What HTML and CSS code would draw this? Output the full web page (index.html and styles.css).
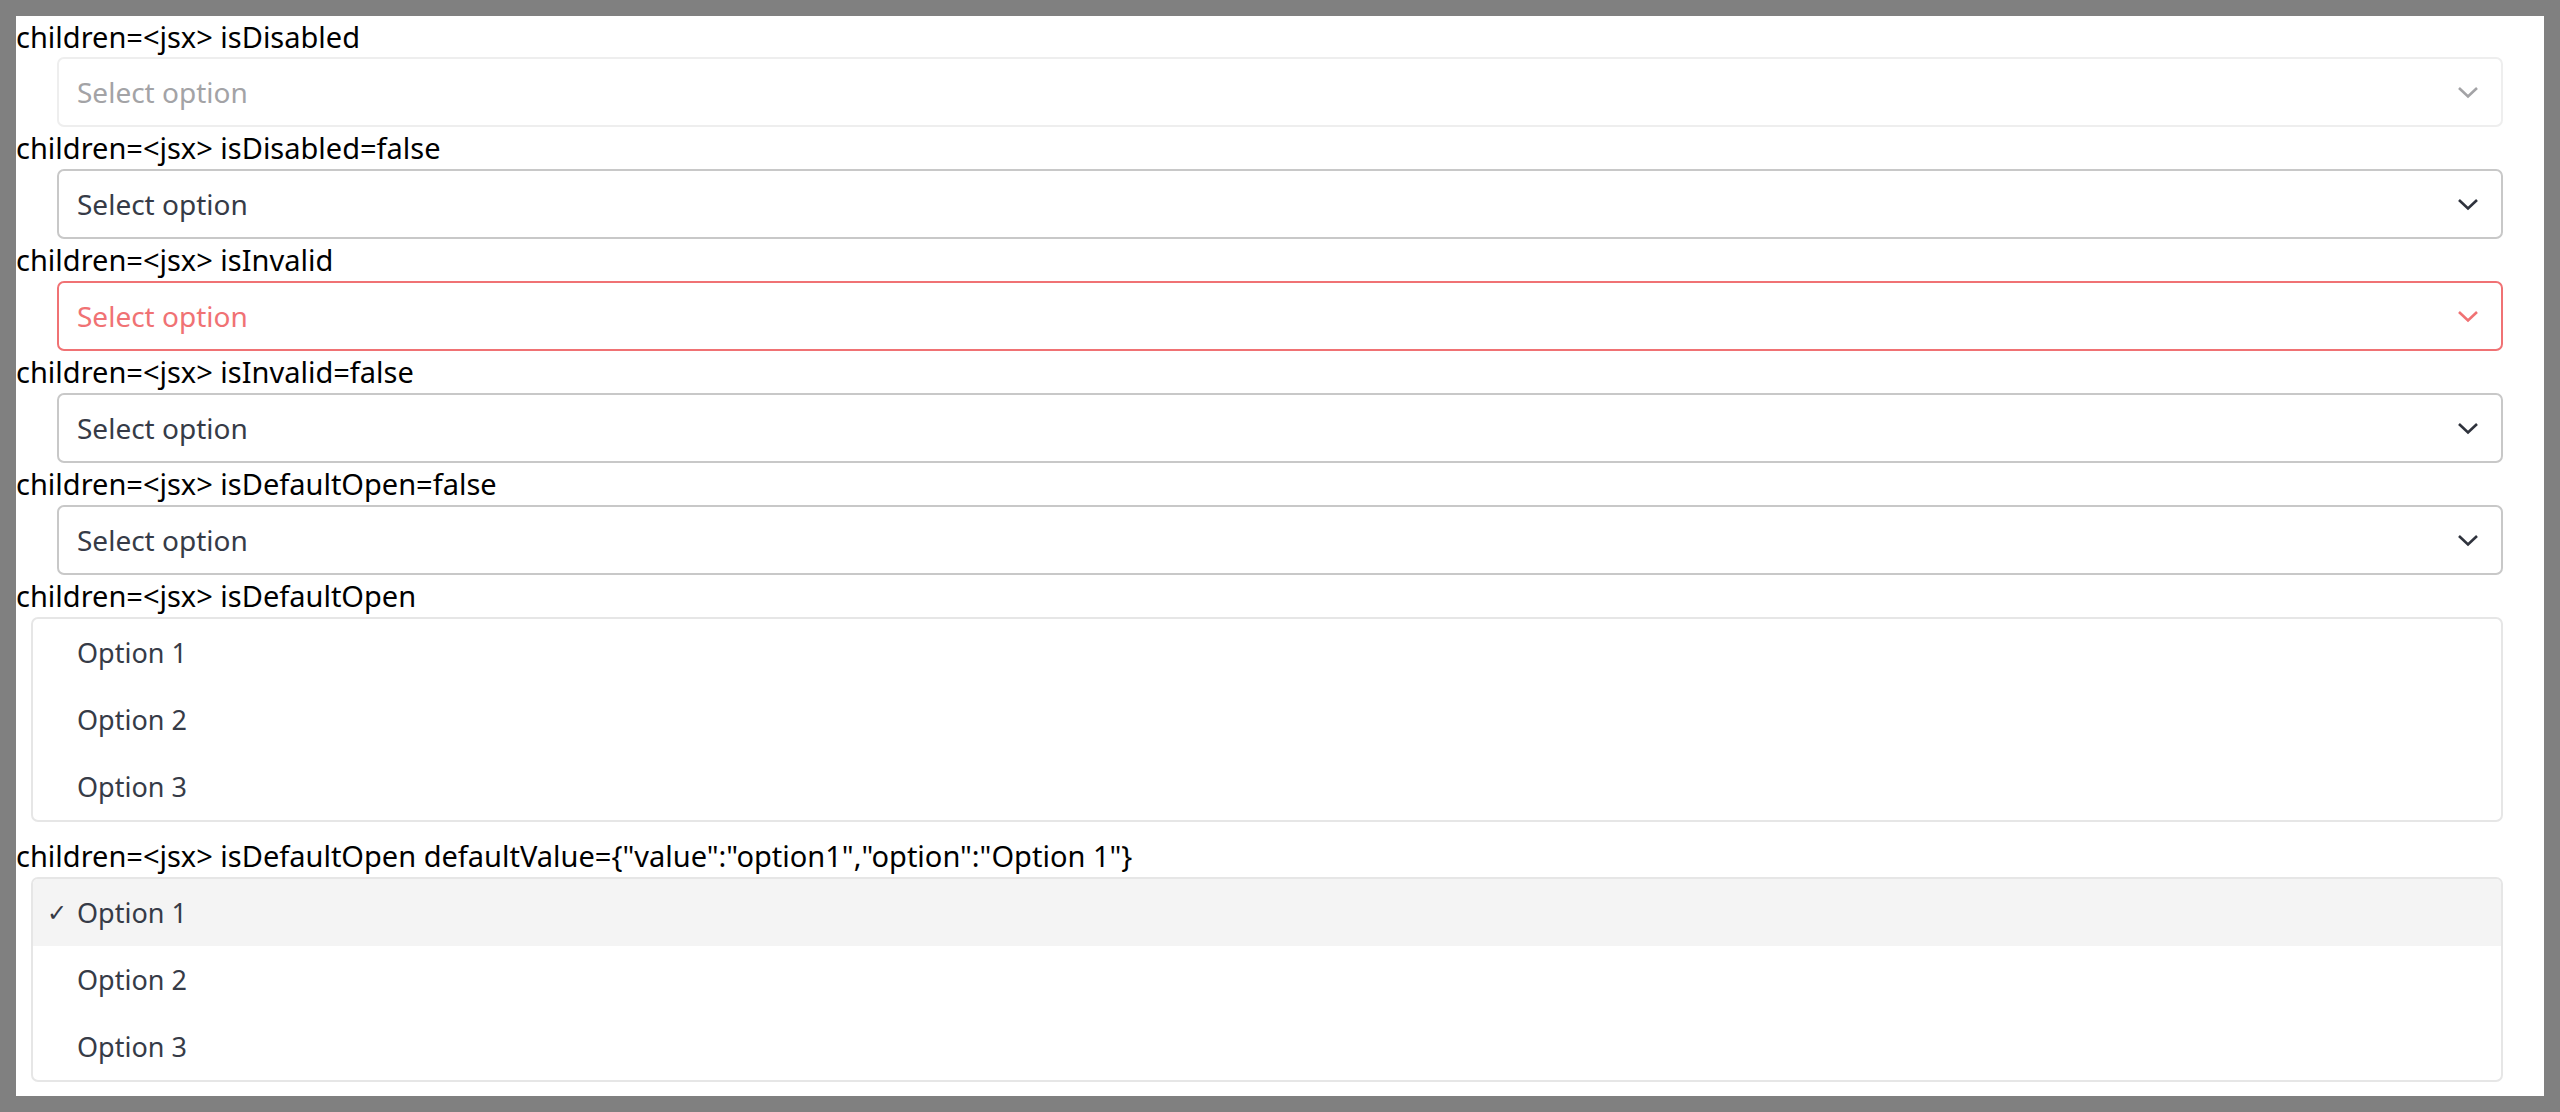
FILE: index.html
```html
<!DOCTYPE html>
<html>
<head>
<meta charset="utf-8">
<link rel="stylesheet" href="styles.css">
</head>
<body>
<div class="page">
  <div class="label first">children=&lt;jsx&gt; isDisabled</div>
  <div class="select disabled">
    <span class="value">Select option</span>
    <svg class="chev" width="22" height="13" viewBox="0 0 22 13"><polyline points="2,2 11,10.5 20,2"/></svg>
  </div>

  <div class="label">children=&lt;jsx&gt; isDisabled=false</div>
  <div class="select">
    <span class="value">Select option</span>
    <svg class="chev" width="22" height="13" viewBox="0 0 22 13"><polyline points="2,2 11,10.5 20,2"/></svg>
  </div>

  <div class="label">children=&lt;jsx&gt; isInvalid</div>
  <div class="select invalid">
    <span class="value">Select option</span>
    <svg class="chev" width="22" height="13" viewBox="0 0 22 13"><polyline points="2,2 11,10.5 20,2"/></svg>
  </div>

  <div class="label">children=&lt;jsx&gt; isInvalid=false</div>
  <div class="select">
    <span class="value">Select option</span>
    <svg class="chev" width="22" height="13" viewBox="0 0 22 13"><polyline points="2,2 11,10.5 20,2"/></svg>
  </div>

  <div class="label">children=&lt;jsx&gt; isDefaultOpen=false</div>
  <div class="select">
    <span class="value">Select option</span>
    <svg class="chev" width="22" height="13" viewBox="0 0 22 13"><polyline points="2,2 11,10.5 20,2"/></svg>
  </div>

  <div class="label">children=&lt;jsx&gt; isDefaultOpen</div>
  <div class="listbox">
    <div class="option"><span class="check"></span><span>Option 1</span></div>
    <div class="option"><span class="check"></span><span>Option 2</span></div>
    <div class="option"><span class="check"></span><span>Option 3</span></div>
  </div>

  <div class="label">children=&lt;jsx&gt; isDefaultOpen defaultValue={"value":"option1","option":"Option 1"}</div>
  <div class="listbox">
    <div class="option selected"><span class="check">✓</span><span>Option 1</span></div>
    <div class="option"><span class="check"></span><span>Option 2</span></div>
    <div class="option"><span class="check"></span><span>Option 3</span></div>
  </div>
</div>
</body>
</html>
```

FILE: styles.css
```css
html {
  background: #808080;
}
body {
  margin: 16px;
  background: #ffffff;
  height: 1080px;
  overflow: hidden;
  font-family: "Noto Sans", sans-serif;
}
.page {
  display: flex;
  flex-direction: column;
}
.label {
  height: 42px;
  line-height: 42px;
  font-size: 29px;
  color: #000;
  white-space: nowrap;
}
.label.first {
  height: 41px;
  line-height: 41px;
}
.select {
  box-sizing: border-box;
  height: 70px;
  margin: 0 41px;
  border: 2px solid #c8c8c8;
  border-radius: 7px;
  display: flex;
  align-items: center;
  justify-content: space-between;
  padding: 0 22px 0 18px;
  font-size: 28px;
  color: #363b47;
}
.chev polyline {
  fill: none;
  stroke: #2f333d;
  stroke-width: 2.6;
}
.select.disabled {
  border-color: #eeeeee;
  color: #a3a3a6;
}
.select.disabled .chev polyline {
  stroke: #a3a3a6;
}
.select.invalid {
  border-color: #f07274;
  color: #f07274;
}
.select.invalid .chev polyline {
  stroke: #f07274;
}
.listbox {
  box-sizing: border-box;
  margin: 0 41px 13px 15px;
  border: 2px solid #e6e6e6;
  border-radius: 7px;
  overflow: hidden;
}
.option {
  height: 67px;
  display: flex;
  align-items: center;
  padding-left: 14px;
  font-size: 27px;
  color: #363b47;
}
.option.selected {
  background: #f4f4f4;
}
.check {
  width: 30px;
  font-family: "DejaVu Sans", sans-serif;
  font-size: 24px;
  color: #363b47;
}
```
